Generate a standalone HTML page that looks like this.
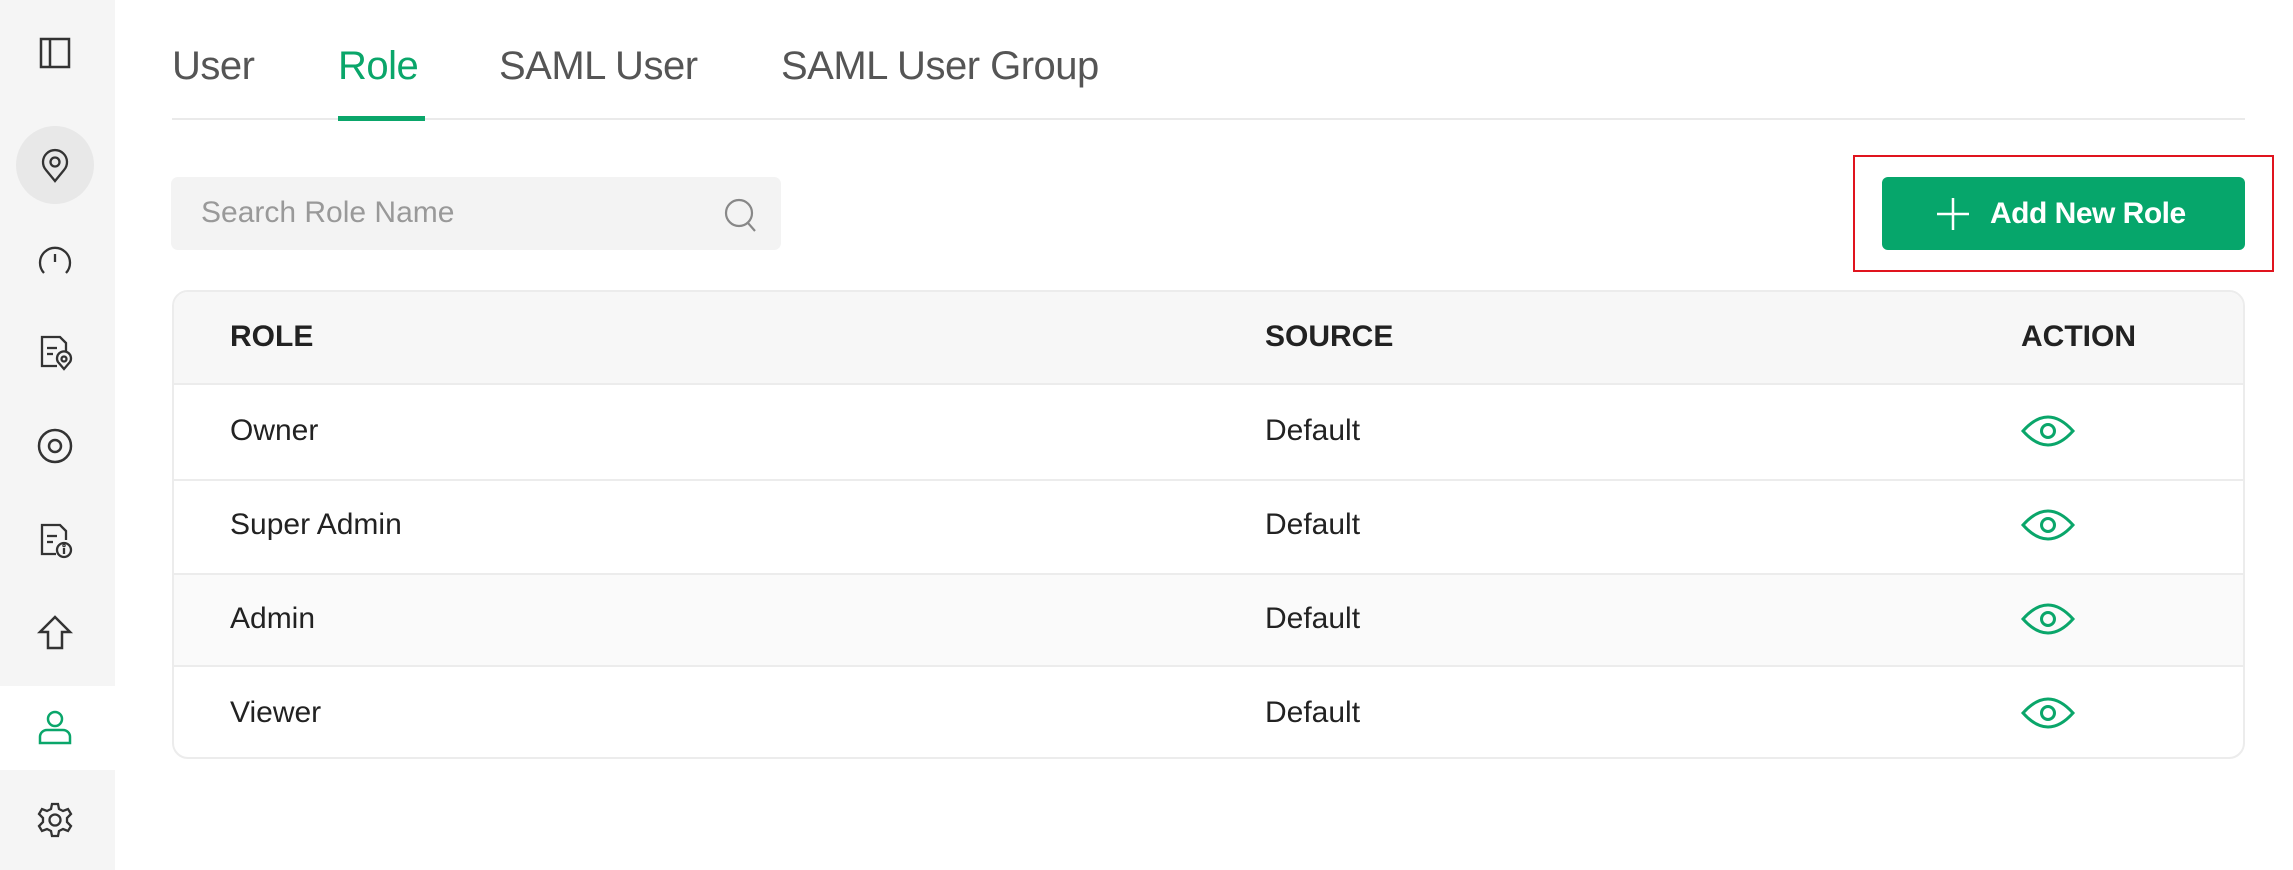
<!DOCTYPE html>
<html><head><meta charset="utf-8"><style>
*{box-sizing:border-box;margin:0;padding:0}
body{width:2293px;height:870px;background:#fff;font-family:"Liberation Sans",sans-serif;position:relative;overflow:hidden;color:#222}
.sb{position:absolute;left:0;top:0;width:115px;height:870px;background:#f5f5f5}
.act{position:absolute;left:0;top:686px;width:115px;height:84px;background:#fff}
.ic{position:absolute;left:35px;width:40px;height:40px}
.tab{position:absolute;top:44px;font-size:40px;color:#555;letter-spacing:-0.5px}
.t{position:absolute;font-size:30px}
.h{font-weight:bold;color:#222}
</style></head><body>
<div class="sb"></div>
<div class="act"></div>
<div style="position:absolute;left:16px;top:126px;width:78px;height:78px;border-radius:50%;background:#e8e8e8"></div>
<svg class="ic" style="top:33px" viewBox="0 0 40 40" fill="none" stroke="#333" stroke-width="2.5"><rect x="6" y="6" width="28" height="28"/><line x1="15" y1="6" x2="15" y2="34"/></svg>
<svg class="ic" style="top:145px" viewBox="0 0 40 40" fill="none" stroke="#333" stroke-width="2.3"><path d="M20 36 L11 25 A12 12 0 1 1 29 25 Z"/><circle cx="20" cy="17" r="4.5"/></svg>
<svg class="ic" style="top:240px" viewBox="0 0 40 40" fill="none" stroke="#333" stroke-width="2.3"><path d="M9 33 A15 15 0 1 1 31 33"/><line x1="20" y1="14" x2="20" y2="22"/></svg>
<svg class="ic" style="top:332px" viewBox="0 0 40 40" fill="none" stroke="#333" stroke-width="2.3"><path d="M22 34 H7 V5 H25 L31 11 V20"/><line x1="12" y1="16" x2="22" y2="16"/><line x1="12" y1="22" x2="18" y2="22"/><path d="M29 37 L23 30 A7 7 0 1 1 35 30 Z"/><circle cx="29" cy="27" r="2.5"/></svg>
<svg class="ic" style="top:426px" viewBox="0 0 40 40" fill="none" stroke="#333" stroke-width="2.5"><circle cx="20" cy="20" r="16"/><circle cx="20" cy="20" r="6"/></svg>
<svg class="ic" style="top:520px" viewBox="0 0 40 40" fill="none" stroke="#333" stroke-width="2.3"><path d="M21 34 H7 V5 H25 L31 11 V20"/><line x1="12" y1="16" x2="22" y2="16"/><line x1="12" y1="22" x2="18" y2="22"/><circle cx="29" cy="30" r="7"/><line x1="29" y1="28" x2="29" y2="34"/><circle cx="29" cy="25.5" r=".6"/></svg>
<svg class="ic" style="top:613px" viewBox="0 0 40 40" fill="none" stroke="#333" stroke-width="2.5"><path d="M20 4 L35 19 H27 V35 H13 V19 H5 Z"/></svg>
<svg class="ic" style="top:707px" viewBox="0 0 40 40" fill="none" stroke="#0aa66a" stroke-width="2.5"><circle cx="20" cy="12" r="7"/><path d="M5 36 V30 A7 7 0 0 1 12 23 H28 A7 7 0 0 1 35 30 V36 Z"/></svg>
<svg class="ic" style="top:800px" viewBox="0 0 40 40" fill="none" stroke="#333" stroke-width="2.3"><path d="M17 4 H23 L24 9 L28 11 L33 9 L36 14 L32 18 V22 L36 26 L33 31 L28 29 L24 31 L23 36 H17 L16 31 L12 29 L7 31 L4 26 L8 22 V18 L4 14 L7 9 L12 11 L16 9 Z"/><circle cx="20" cy="20" r="5.5"/></svg>

<div class="tab" style="left:172px">User</div>
<div class="tab" style="left:338px;color:#0aa66a">Role</div>
<div class="tab" style="left:499px">SAML User</div>
<div class="tab" style="left:781px">SAML User Group</div>
<div style="position:absolute;left:172px;top:118px;width:2073px;height:2px;background:#eaeaea"></div>
<div style="position:absolute;left:338px;top:116px;width:87px;height:5px;background:#0aa66a"></div>

<div style="position:absolute;left:171px;top:177px;width:610px;height:73px;background:#f3f3f3;border-radius:7px"></div>
<div class="t" style="left:201px;top:196px;color:#999">Search Role Name</div>
<svg style="position:absolute;left:723px;top:197px" width="36" height="38" viewBox="0 0 36 38" fill="none" stroke="#888" stroke-width="2.2"><circle cx="16" cy="16" r="13"/><line x1="25" y1="26" x2="32" y2="34"/></svg>

<div style="position:absolute;left:1853px;top:155px;width:421px;height:117px;border:2px solid #e0141e"></div>
<div style="position:absolute;left:1882px;top:177px;width:363px;height:73px;background:#06a66b;border-radius:6px"></div>
<svg style="position:absolute;left:1935px;top:196px" width="36" height="36" viewBox="0 0 36 36" stroke="#fff" stroke-width="2.5"><line x1="18" y1="2" x2="18" y2="34"/><line x1="2" y1="18" x2="34" y2="18"/></svg>
<div class="t" style="left:1990px;top:197px;color:#fff;font-weight:bold;letter-spacing:-0.5px">Add New Role</div>

<div style="position:absolute;left:172px;top:290px;width:2073px;height:469px;border:2px solid #ececec;border-radius:16px;overflow:hidden">
 <div style="position:absolute;left:0;top:0;width:100%;height:93px;background:#f7f7f7;border-bottom:2px solid #ececec"></div>
 <div style="position:absolute;left:0;top:187px;width:100%;height:2px;background:#ececec"></div>
 <div style="position:absolute;left:0;top:281px;width:100%;height:94px;background:#fafafa;border-top:2px solid #ececec;border-bottom:2px solid #ececec"></div>
</div>
<div class="t h" style="left:230px;top:320px">ROLE</div>
<div class="t h" style="left:1265px;top:320px">SOURCE</div>
<div class="t h" style="left:2021px;top:320px">ACTION</div>

<div class="t" style="left:230px;top:414px">Owner</div>
<div class="t" style="left:230px;top:508px">Super Admin</div>
<div class="t" style="left:230px;top:602px">Admin</div>
<div class="t" style="left:230px;top:696px">Viewer</div>
<div class="t" style="left:1265px;top:414px">Default</div>
<div class="t" style="left:1265px;top:508px">Default</div>
<div class="t" style="left:1265px;top:602px">Default</div>
<div class="t" style="left:1265px;top:696px">Default</div>

<svg style="position:absolute;left:2020px;top:411px" width="56" height="40" viewBox="0 0 56 40" fill="none" stroke="#0aa66a" stroke-width="3"><path d="M3 20 Q28 -8 53 20 Q28 48 3 20 Z"/><circle cx="28" cy="20" r="6.5"/></svg>
<svg style="position:absolute;left:2020px;top:505px" width="56" height="40" viewBox="0 0 56 40" fill="none" stroke="#0aa66a" stroke-width="3"><path d="M3 20 Q28 -8 53 20 Q28 48 3 20 Z"/><circle cx="28" cy="20" r="6.5"/></svg>
<svg style="position:absolute;left:2020px;top:599px" width="56" height="40" viewBox="0 0 56 40" fill="none" stroke="#0aa66a" stroke-width="3"><path d="M3 20 Q28 -8 53 20 Q28 48 3 20 Z"/><circle cx="28" cy="20" r="6.5"/></svg>
<svg style="position:absolute;left:2020px;top:693px" width="56" height="40" viewBox="0 0 56 40" fill="none" stroke="#0aa66a" stroke-width="3"><path d="M3 20 Q28 -8 53 20 Q28 48 3 20 Z"/><circle cx="28" cy="20" r="6.5"/></svg>
</body></html>
